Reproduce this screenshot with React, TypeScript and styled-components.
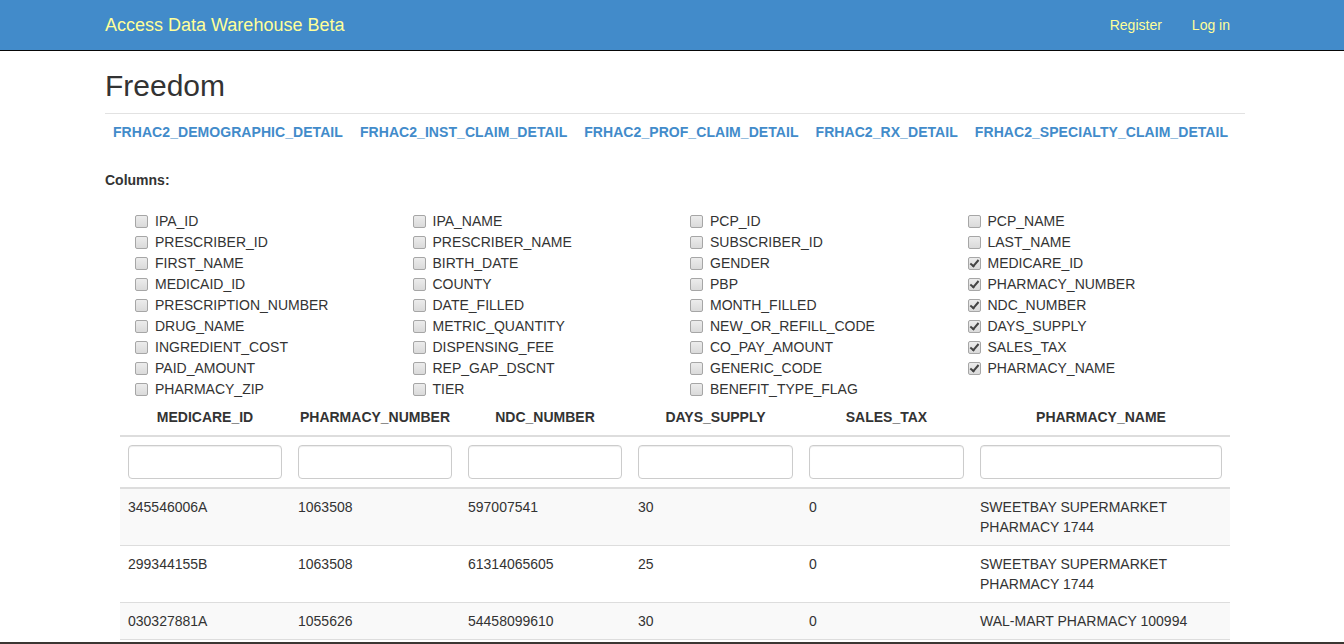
import React from "react";
import styled, { createGlobalStyle } from "styled-components";

const GlobalStyle = createGlobalStyle`
  html, body { margin: 0; padding: 0; background: #fff; }
  body {
    font-family: "Liberation Sans", Arial, Helvetica, sans-serif;
    font-size: 14px;
    line-height: 20px;
    color: #333;
  }
  * { box-sizing: border-box; }
`;

const Navbar = styled.nav`
  height: 51px;
  background: #428bca;
  border-bottom: 1px solid #080808;
`;

const NavInner = styled.div`
  width: 1140px;
  margin-left: 105px;
  height: 50px;
  display: flex;
  align-items: center;
  justify-content: space-between;
`;

const Brand = styled.a`
  font-size: 18px;
  line-height: 20px;
  color: #ffff99;
  text-decoration: none;
`;

const NavLinks = styled.div`
  display: flex;
`;

const NavLink = styled.a`
  padding: 15px;
  line-height: 20px;
  font-size: 14px;
  color: #ffff99;
  text-decoration: none;
`;

const Container = styled.main`
  width: 1140px;
  margin-left: 105px;
`;

const Title = styled.h2`
  margin: 18px 0 0;
  font-size: 30px;
  font-weight: normal;
  line-height: 33px;
  color: #333;
`;

const Rule = styled.hr`
  margin: 11px 0 0;
  border: 0;
  border-top: 1px solid #e2e2e2;
`;

const TableNav = styled.div`
  display: flex;
`;

const TableLink = styled.a`
  padding: 8px 9px 10px 8px;
  font-size: 14px;
  font-weight: bold;
  line-height: 20px;
  letter-spacing: 0.06px;
  color: #428bca;
  text-decoration: none;
`;

const SectionLabel = styled.div`
  margin-top: 18px;
  font-weight: bold;
  line-height: 20px;
`;

const ColumnGrid = styled.div`
  margin: 21px 15px 0;
  display: grid;
  grid-template-columns: repeat(4, 1fr);
  row-gap: 1px;
`;

const ColumnOption = styled.label`
  display: flex;
  align-items: center;
  padding-left: 15px;
  height: 20px;
  line-height: 20px;
  color: #333;
`;

const Check = styled.input.attrs({ type: "checkbox" })`
  appearance: none;
  -webkit-appearance: none;
  width: 13px;
  height: 13px;
  margin: 0 7px 0 0;
  border: 1px solid #a6a6a6;
  border-radius: 2px;
  background: linear-gradient(#ececec, #dadada);
  position: relative;
  flex: none;
  &:checked::after {
    content: "";
    position: absolute;
    left: 3px;
    top: 0px;
    width: 3px;
    height: 7px;
    border: solid #444;
    border-width: 0 2px 2px 0;
    transform: rotate(40deg);
  }
`;

const Table = styled.table`
  margin: 0 15px;
  width: 1110px;
  border-collapse: collapse;
  border-spacing: 0;
  table-layout: fixed;
`;

const HeadCell = styled.th`
  padding: 8px;
  text-align: center;
  font-weight: bold;
  line-height: 20px;
  border-bottom: 2px solid #ddd;
`;

const FilterCell = styled.td`
  padding: 8px;
  border-bottom: 2px solid #ddd;
`;

const FilterInput = styled.input`
  display: block;
  width: 100%;
  height: 34px;
  padding: 6px 12px;
  font-size: 14px;
  border: 1px solid #ccc;
  border-radius: 4px;
  box-shadow: inset 0 1px 1px rgba(0, 0, 0, 0.075);
  background: #fff;
`;

const BodyRow = styled.tr<{ $striped: boolean }>`
  background: ${(p) => (p.$striped ? "#f9f9f9" : "#fff")};
  border-bottom: 1px solid #ddd;
`;

const Cell = styled.td`
  padding: 8px;
  line-height: 20px;
  vertical-align: top;
  text-align: left;
  color: #333;
`;

const BottomBar = styled.div`
  position: fixed;
  left: 0;
  right: 0;
  bottom: 0;
  height: 2px;
  background: #3b3632;
`;

const tables = [
  "FRHAC2_DEMOGRAPHIC_DETAIL",
  "FRHAC2_INST_CLAIM_DETAIL",
  "FRHAC2_PROF_CLAIM_DETAIL",
  "FRHAC2_RX_DETAIL",
  "FRHAC2_SPECIALTY_CLAIM_DETAIL",
];

const cols1 = ["IPA_ID", "PRESCRIBER_ID", "FIRST_NAME", "MEDICAID_ID", "PRESCRIPTION_NUMBER", "DRUG_NAME", "INGREDIENT_COST", "PAID_AMOUNT", "PHARMACY_ZIP"];
const cols2 = ["IPA_NAME", "PRESCRIBER_NAME", "BIRTH_DATE", "COUNTY", "DATE_FILLED", "METRIC_QUANTITY", "DISPENSING_FEE", "REP_GAP_DSCNT", "TIER"];
const cols3 = ["PCP_ID", "SUBSCRIBER_ID", "GENDER", "PBP", "MONTH_FILLED", "NEW_OR_REFILL_CODE", "CO_PAY_AMOUNT", "GENERIC_CODE", "BENEFIT_TYPE_FLAG"];
const cols4 = ["PCP_NAME", "LAST_NAME", "MEDICARE_ID", "PHARMACY_NUMBER", "NDC_NUMBER", "DAYS_SUPPLY", "SALES_TAX", "PHARMACY_NAME"];
const checked = new Set(["MEDICARE_ID", "PHARMACY_NUMBER", "NDC_NUMBER", "DAYS_SUPPLY", "SALES_TAX", "PHARMACY_NAME"]);

const options: string[] = [];
for (let i = 0; i < 9; i++) {
  [cols1, cols2, cols3, cols4].forEach((c) => {
    if (c[i]) options.push(c[i]);
  });
}

const headers = ["MEDICARE_ID", "PHARMACY_NUMBER", "NDC_NUMBER", "DAYS_SUPPLY", "SALES_TAX", "PHARMACY_NAME"];
const widths = [170, 170, 170, 171, 171, 258];

const rows = [
  ["345546006A", "1063508", "597007541", "30", "0", "SWEETBAY SUPERMARKET PHARMACY 1744"],
  ["299344155B", "1063508", "61314065605", "25", "0", "SWEETBAY SUPERMARKET PHARMACY 1744"],
  ["030327881A", "1055626", "54458099610", "30", "0", "WAL-MART PHARMACY 100994"],
];

export default function App() {
  return (
    <>
      <GlobalStyle />
      <Navbar>
        <NavInner>
          <Brand href="#">Access Data Warehouse Beta</Brand>
          <NavLinks>
            <NavLink href="#">Register</NavLink>
            <NavLink href="#">Log in</NavLink>
          </NavLinks>
        </NavInner>
      </Navbar>
      <Container>
        <Title>Freedom</Title>
        <Rule />
        <TableNav>
          {tables.map((t) => (
            <TableLink key={t} href="#">{t}</TableLink>
          ))}
        </TableNav>
        <SectionLabel>Columns:</SectionLabel>
        <ColumnGrid>
          {options.map((o) => (
            <ColumnOption key={o}>
              <Check defaultChecked={checked.has(o)} />
              {o}
            </ColumnOption>
          ))}
        </ColumnGrid>
        <Table>
          <colgroup>
            {widths.map((w, i) => (
              <col key={i} style={{ width: w }} />
            ))}
          </colgroup>
          <thead>
            <tr>
              {headers.map((h) => (
                <HeadCell key={h}>{h}</HeadCell>
              ))}
            </tr>
            <tr>
              {headers.map((h) => (
                <FilterCell key={h}>
                  <FilterInput type="text" />
                </FilterCell>
              ))}
            </tr>
          </thead>
          <tbody>
            {rows.map((r, i) => (
              <BodyRow key={i} $striped={i % 2 === 0}>
                {r.map((c, j) => (
                  <Cell key={j}>{c}</Cell>
                ))}
              </BodyRow>
            ))}
          </tbody>
        </Table>
      </Container>
      <BottomBar />
    </>
  );
}
